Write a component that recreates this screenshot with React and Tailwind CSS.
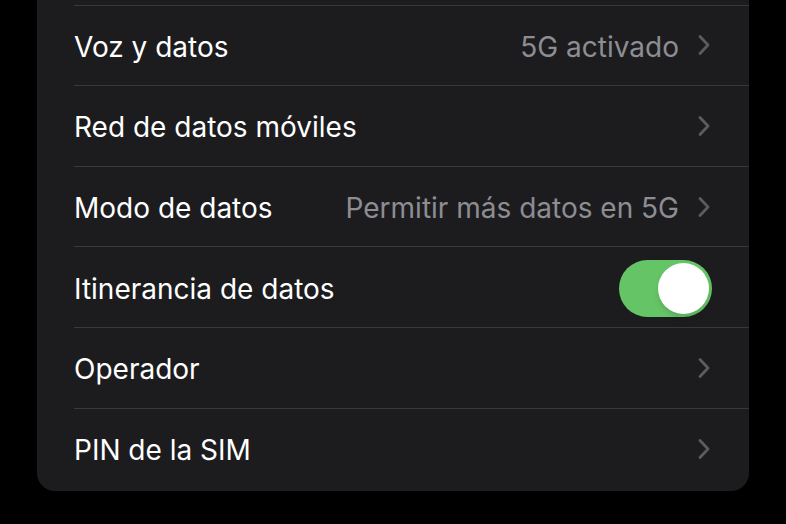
import { useState } from 'react';

function Chevron() {
  return (
    <svg width="14" height="22" viewBox="0 0 14 22" fill="none" className="shrink-0">
      <path d="M3 2.5 L11 11 L3 19.5" stroke="#5c5c60" strokeWidth="2.8" strokeLinecap="round" strokeLinejoin="round" />
    </svg>
  );
}

function Toggle({ on, onChange }) {
  return (
    <button
      type="button"
      onClick={() => onChange(!on)}
      className={`relative w-[93px] h-[57px] rounded-full ${on ? 'bg-[#65c466]' : 'bg-[#39393d]'}`}
    >
      <span
        className={`absolute top-[3px] w-[51px] h-[51px] rounded-full bg-white shadow-md ${on ? 'left-[39px]' : 'left-[3px]'}`}
      />
    </button>
  );
}

function Row({ label, value, chevron = true, toggle, last }) {
  return (
    <div className="pl-[37px]">
      <div
        className={`h-[80.6px] flex items-center pr-[38px] ${last ? '' : 'border-b border-[#38383a]'}`}
      >
        <span className="text-[28px] text-white flex-1 pt-[3px]">{label}</span>
        {value && <span className="text-[28px] text-[#8d8d93] mr-[18px] pt-[3px]">{value}</span>}
        {toggle}
        {chevron && !toggle && <Chevron />}
      </div>
    </div>
  );
}

export default function App() {
  const [roaming, setRoaming] = useState(true);

  return (
    <div className="w-[786px] h-[524px] bg-black overflow-hidden" style={{ fontFamily: 'Inter, "Noto Sans", sans-serif' }}>
      <div className="ml-[37px] w-[712px] mt-[-75px] pb-[2px] bg-[#1c1c1e] rounded-b-[18px]">
        <Row label="" chevron={false} />
        <Row label="Voz y datos" value="5G activado" />
        <Row label="Red de datos móviles" />
        <Row label="Modo de datos" value="Permitir más datos en 5G" />
        <Row
          label="Itinerancia de datos"
          toggle={<div className="mt-[8px] mr-[-1px]"><Toggle on={roaming} onChange={setRoaming} /></div>}
        />
        <Row label="Operador" />
        <Row label="PIN de la SIM" last />
      </div>
    </div>
  );
}
